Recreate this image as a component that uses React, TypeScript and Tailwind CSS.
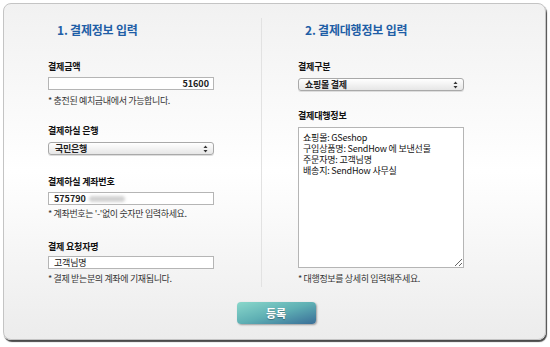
import React from "react";

const font = { fontFamily: '"Noto Sans CJK KR", "Noto Sans", sans-serif' };

function SelectBox({ label }: { label: string }) {
  return (
    <div className="flex h-[13px] w-[166px] items-center justify-between rounded-[3px] border border-[#a9a9a9] bg-gradient-to-b from-white to-[#e6e6e6] pl-[6px] pr-[5px] shadow-[0_1px_0_#ddd]">
      <span className="text-[9px] font-bold leading-[11px] tracking-[-0.3px] text-[#222]">{label}</span>
      <span className="flex flex-col items-center leading-none">
        <svg width="5" height="8" viewBox="0 0 5 8">
          <path d="M2.5 0.5 L4.5 3 L0.5 3 Z" fill="#333" />
          <path d="M2.5 7.5 L4.5 5 L0.5 5 Z" fill="#333" />
        </svg>
      </span>
    </div>
  );
}

function Label({ children, mt }: { children: React.ReactNode; mt: string }) {
  return <div className={`${mt} text-[9px] font-bold leading-[13px] tracking-[-0.2px] text-[#111]`}>{children}</div>;
}

function Note({ children, mt }: { children: React.ReactNode; mt: string }) {
  return <div className={`${mt} text-[9px] leading-[13px] tracking-[-0.35px] text-[#333]`}>{children}</div>;
}

export default function App() {
  return (
    <div className="h-[347px] w-[550px] bg-white pl-[3px] pt-[3px]" style={font}>
      <div className="flex h-[337px] w-[543px] flex-col items-center rounded-[8px] border border-[#c4c4c4] bg-gradient-to-b from-[#f1f1f1] via-white to-[#ececec] pt-[14px] pb-[15px] shadow-[1px_2px_1px_#4a4a4a]">
        <div className="flex w-full">
          {/* left column */}
          <div className="flex h-[269px] w-[257px] flex-col pl-[44px]">
            <div className="ml-[9px] mt-[4px] text-[12px] font-bold leading-[16px] tracking-[-0.2px] text-[#1f5ea6]">1. 결제정보 입력</div>
            <Label mt="mt-[22px]">결제금액</Label>
            <div className="mt-[4px] flex h-[13px] w-[166px] items-center justify-end border border-[#b5b5b5] bg-white pr-[4px] text-[9px] font-bold leading-[11px] text-[#222]">
              51600
            </div>
            <Note mt="mt-[4px]">* 충전된 예치금내에서 가능합니다.</Note>
            <Label mt="mt-[17px]">결제하실 은행</Label>
            <div className="mt-[5px]">
              <SelectBox label="국민은행" />
            </div>
            <Label mt="mt-[20px]">결제하실 계좌번호</Label>
            <div className="mt-[4px] flex h-[13px] w-[166px] items-center border border-[#b5b5b5] bg-white pl-[5px] text-[9px] font-bold leading-[11px] text-[#222]">
              575790
              <span className="ml-[3px] h-[6px] w-[36px] rounded-full bg-[#d2d2d2] blur-[1.5px]" />
            </div>
            <Note mt="mt-[2px]">* 계좌번호는 '-'없이 숫자만 입력하세요.</Note>
            <Label mt="mt-[20px]">결제 요청자명</Label>
            <div className="mt-[3px] flex h-[13px] w-[166px] items-center border border-[#b5b5b5] bg-white pl-[5px] text-[9px] leading-[11px] tracking-[-0.2px] text-[#111]">
              고객님명
            </div>
            <Note mt="mt-[3px]">* 결제 받는분의 계좌에 기재됩니다.</Note>
          </div>
          {/* divider */}
          <div className="h-[269px] w-px bg-[#e2e2e2]" />
          {/* right column */}
          <div className="flex flex-col pl-[36px]">
            <div className="ml-[7px] mt-[4px] text-[12px] font-bold leading-[16px] tracking-[-0.2px] text-[#1f5ea6]">2. 결제대행정보 입력</div>
            <Label mt="mt-[22px]">결제구분</Label>
            <div className="mt-[5px]">
              <SelectBox label="쇼핑몰 결제" />
            </div>
            <Label mt="mt-[18px]">결제대행정보</Label>
            <textarea
              className="mt-[5px] h-[141px] w-[166px] resize border border-[#b5b5b5] bg-white px-[4px] pt-[4px] text-[9px] leading-[11px] tracking-[-0.2px] text-[#111] outline-none"
              style={font}
              defaultValue={"쇼핑몰: GSeshop\n구입상품명: SendHow 에 보낸선물\n주문자명: 고객님명\n배송지: SendHow 사무실"}
            />
            <Note mt="mt-[4px]">* 대행정보를 상세히 입력해주세요.</Note>
          </div>
        </div>
        <button className="mt-[15px] ml-[3px] flex h-[22px] w-[79px] items-center justify-center rounded-[4px] bg-gradient-to-br from-[#8ad8cb] via-[#5fb0b4] to-[#3a6e97] text-[11px] font-bold text-white shadow-[1px_1px_2px_rgba(0,0,0,0.35)] [text-shadow:0_1px_1px_rgba(0,0,0,0.3)]">
          등록
        </button>
      </div>
    </div>
  );
}
